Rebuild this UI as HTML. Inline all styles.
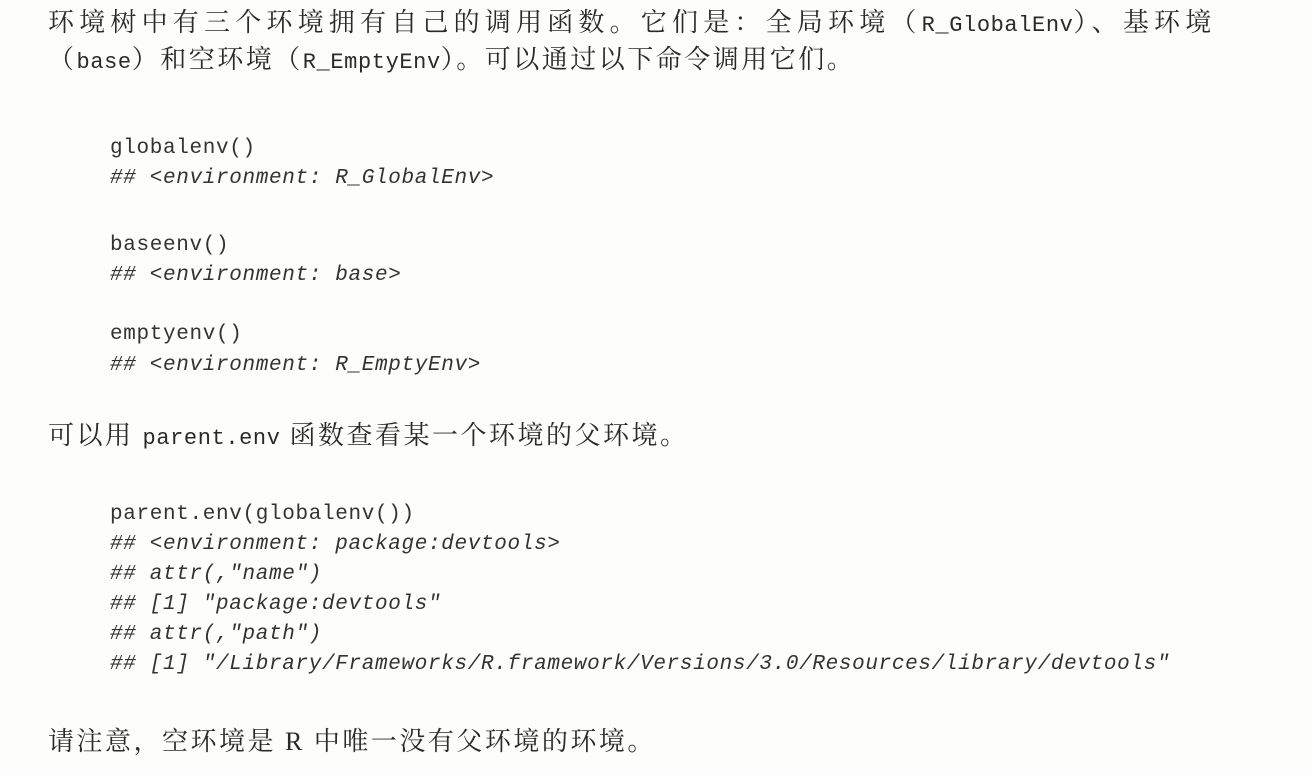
<!DOCTYPE html>
<html><head><meta charset="utf-8"><style>
html,body{margin:0;padding:0;width:1312px;height:777px;background:#fdfdfb;overflow:hidden}
.t{position:absolute;left:48px;font-family:"Liberation Serif","Noto Serif CJK SC",serif;font-size:26px;letter-spacing:2.5px;color:#2a2a2a;white-space:nowrap;line-height:30px}
.c{position:absolute;left:110px;font-family:"Liberation Mono",monospace;font-size:21px;color:#333;white-space:nowrap;line-height:30px;letter-spacing:0.65px}
.m{font-family:"Liberation Mono",monospace;font-size:22px;letter-spacing:0.6px}
i{font-style:italic}
</style></head><body>
<div class="t" style="top:8px;letter-spacing:5.2px">环境树中有三个环境拥有自己的调用函数。它们是：全局环境（<span class="m">R_GlobalEnv</span>）、基环境</div>
<div class="t" style="top:45px">（<span class="m">base</span>）和空环境（<span class="m">R_EmptyEnv</span>）。可以通过以下命令调用它们。</div>
<div class="c" style="top:134px">globalenv()</div>
<div class="c" style="top:164px"><i>## &lt;environment: R_GlobalEnv&gt;</i></div>
<div class="c" style="top:231px">baseenv()</div>
<div class="c" style="top:261px"><i>## &lt;environment: base&gt;</i></div>
<div class="c" style="top:320px">emptyenv()</div>
<div class="c" style="top:351px"><i>## &lt;environment: R_EmptyEnv&gt;</i></div>
<div class="t" style="top:421px">可以用 <span class="m">parent.env</span> 函数查看某一个环境的父环境。</div>
<div class="c" style="top:500px">parent.env(globalenv())</div>
<div class="c" style="top:530px"><i>## &lt;environment: package:devtools&gt;</i></div>
<div class="c" style="top:560px"><i>## attr(,"name")</i></div>
<div class="c" style="top:590px"><i>## [1] "package:devtools"</i></div>
<div class="c" style="top:620px"><i>## attr(,"path")</i></div>
<div class="c" style="top:650px"><i>## [1] "/Library/Frameworks/R.framework/Versions/3.0/Resources/library/devtools"</i></div>
<div class="t" style="top:727px">请注意，空环境是 R 中唯一没有父环境的环境。</div>
</body></html>
